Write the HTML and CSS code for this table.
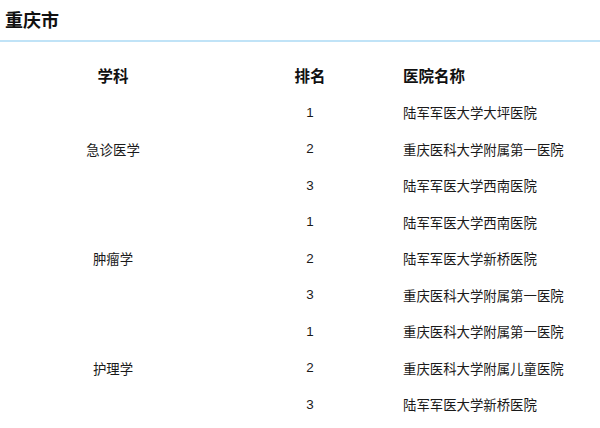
FILE: index.html
```html
<!DOCTYPE html>
<html lang="zh-CN">
<head>
<meta charset="utf-8">
<title>重庆市</title>
<link rel="stylesheet" href="styles.css">
</head>
<body>
<div class="page">
  <h1 class="city">重庆市</h1>
  <table class="rank">
    <thead>
      <tr>
        <th class="c-sub">学科</th>
        <th class="c-rank">排名</th>
        <th class="c-hosp">医院名称</th>
      </tr>
    </thead>
    <tbody>
      <tr><td class="c-sub" rowspan="3">急诊医学</td><td class="c-rank">1</td><td class="c-hosp">陆军军医大学大坪医院</td></tr>
      <tr><td class="c-rank">2</td><td class="c-hosp">重庆医科大学附属第一医院</td></tr>
      <tr><td class="c-rank">3</td><td class="c-hosp">陆军军医大学西南医院</td></tr>
      <tr><td class="c-sub" rowspan="3">肿瘤学</td><td class="c-rank">1</td><td class="c-hosp">陆军军医大学西南医院</td></tr>
      <tr><td class="c-rank">2</td><td class="c-hosp">陆军军医大学新桥医院</td></tr>
      <tr><td class="c-rank">3</td><td class="c-hosp">重庆医科大学附属第一医院</td></tr>
      <tr><td class="c-sub" rowspan="3">护理学</td><td class="c-rank">1</td><td class="c-hosp">重庆医科大学附属第一医院</td></tr>
      <tr><td class="c-rank">2</td><td class="c-hosp">重庆医科大学附属儿童医院</td></tr>
      <tr><td class="c-rank">3</td><td class="c-hosp">陆军军医大学新桥医院</td></tr>
    </tbody>
  </table>
</div>
</body>
</html>
```

FILE: styles.css
```css
html, body {
  margin: 0;
  padding: 0;
  background: #fff;
}
body {
  font-family: "Liberation Sans", Arial, "Noto Sans CJK SC", sans-serif;
  color: #111;
}
.page {
  width: 600px;
}
.city {
  margin: 0;
  height: 40px;
  line-height: 42px;
  padding: 0 5px;
  font-size: 18px;
  font-weight: bold;
  color: #111;
  border-bottom: 2px solid #c0e3f7;
}
.rank {
  margin-top: 14px;
  width: 600px;
  border-collapse: collapse;
  table-layout: fixed;
}
.rank th {
  height: 38px;
  padding: 0;
  font-size: 15.5px;
  font-weight: bold;
  color: #111;
}
.rank td {
  height: 36.5px;
  padding: 0;
  font-size: 13.4px;
  color: #1a1a1a;
}
.c-sub {
  width: 226px;
  text-align: center;
}
.c-rank {
  width: 168px;
  text-align: center;
}
.rank .c-hosp {
  text-align: left;
  padding-left: 9px;
}
```
